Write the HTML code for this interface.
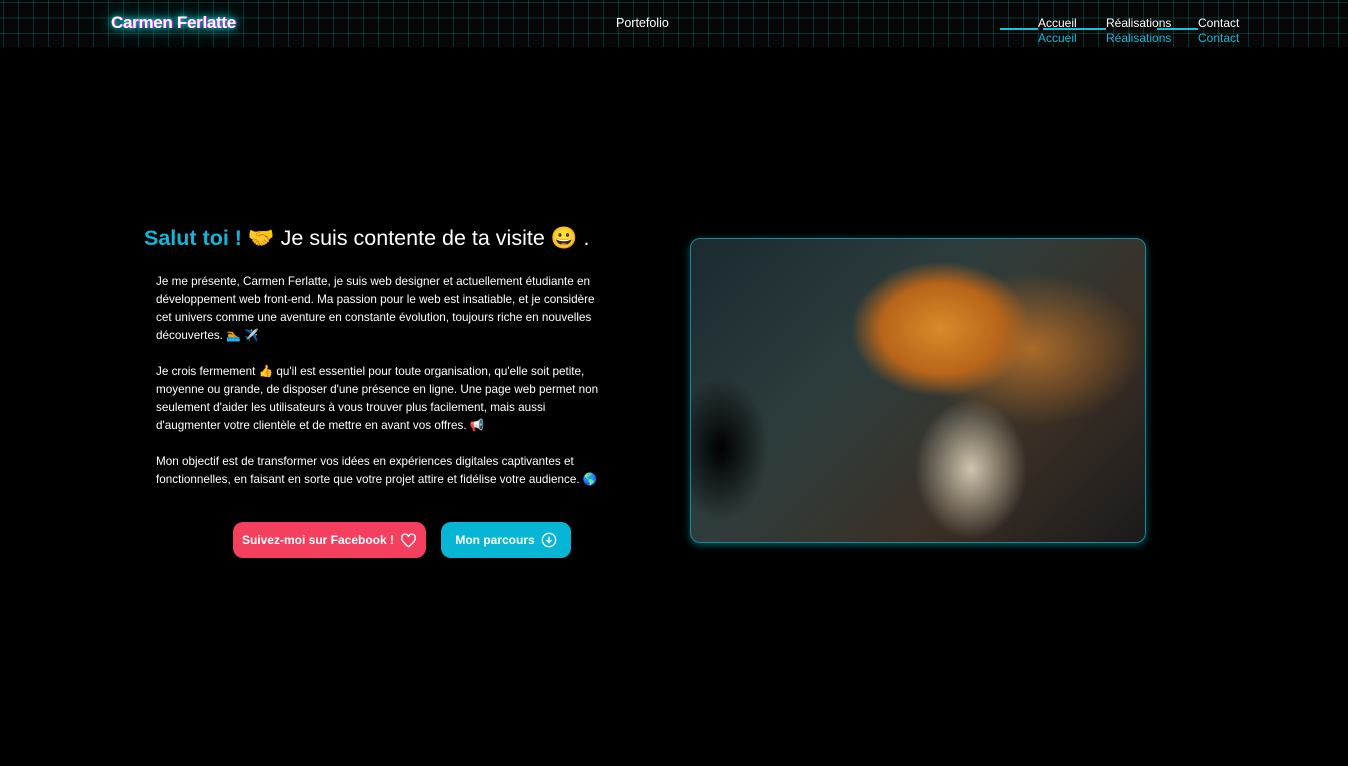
<!DOCTYPE html>
<html><head><meta charset="utf-8"><style>
*{margin:0;padding:0;box-sizing:border-box}
body{width:1348px;height:766px;background:#000;overflow:hidden;font-family:"Liberation Sans","Noto Sans CJK JP",sans-serif;color:#fff;position:relative}
.hdr{position:absolute;left:0;top:0;width:1348px;height:47px;background-color:#070707;
background-image:linear-gradient(rgba(0,150,150,.3) 1px,transparent 1px),linear-gradient(90deg,rgba(0,150,150,.3) 1px,transparent 1px);
background-size:15px 15.5px;background-position:3px 2px}
.logo{position:absolute;left:111px;top:13px;font-size:17px;font-weight:bold;color:#fff;letter-spacing:-0.3px;text-shadow:1px 0 #f0f,0 0 6px #0ff,0 0 14px #0cc,0 0 24px #088}
.pf{position:absolute;left:616px;top:16px;font-size:12.5px}
.nav{position:absolute;top:16px;font-size:12px;line-height:15px}
.nav .b{color:#13b5d8}
.ul{position:absolute;top:28px;height:2px;background:#13c6d8}
h1{position:absolute;left:144px;top:226px;font-size:21.5px;font-weight:normal;white-space:nowrap}
h1 b{color:#13b5d8}
.txt{position:absolute;left:156px;top:273px;width:452px;font-size:11.7px;line-height:18px}
.txt p{margin-bottom:18px}
.btn{position:absolute;top:522px;height:36px;border-radius:10px;font-size:12px;font-weight:bold;display:flex;align-items:center;justify-content:center;gap:6px}
.img{position:absolute;left:690px;top:238px;width:456px;height:305px;border-radius:10px;overflow:hidden;border:1px solid #1a8a9a;box-shadow:0 2px 8px rgba(0,180,200,.5);
background:radial-gradient(ellipse 120px 90px at 250px 90px,#d98a2a 0%,#b8651a 50%,transparent 75%),
radial-gradient(ellipse 160px 110px at 340px 110px,rgba(200,120,40,.8),transparent 70%),
radial-gradient(ellipse 80px 100px at 280px 230px,#cfc4ad,transparent 70%),
radial-gradient(ellipse 60px 90px at 30px 210px,#000,transparent 80%),
linear-gradient(135deg,#1b2a30,#2e3d3c 40%,#3a2f25 70%,#1a1a1a)}
</style></head><body>
<div class="hdr"></div>
<div class="logo">Carmen Ferlatte</div>
<div class="pf">Portefolio</div>
<div class="ul" style="left:1000px;width:38px"></div>
<div class="ul" style="left:1043px;width:63px"></div>
<div class="ul" style="left:1157px;width:41px"></div>
<div class="nav" style="left:1038px">Accueil<br><span class="b">Accueil</span></div>
<div class="nav" style="left:1106px">Réalisations<br><span class="b">Réalisations</span></div>
<div class="nav" style="left:1198px">Contact<br><span class="b">Contact</span></div>
<h1><b>Salut toi !</b> 🤝 Je suis contente de ta visite 😀 .</h1>
<div class="txt">
<p>Je me présente, Carmen Ferlatte, je suis web designer et actuellement étudiante en développement web front-end. Ma passion pour le web est insatiable, et je considère cet univers comme une aventure en constante évolution, toujours riche en nouvelles découvertes. 🏊 ✈️</p>
<p>Je crois fermement 👍 qu'il est essentiel pour toute organisation, qu'elle soit petite, moyenne ou grande, de disposer d'une présence en ligne. Une page web permet non seulement d'aider les utilisateurs à vous trouver plus facilement, mais aussi d'augmenter votre clientèle et de mettre en avant vos offres. 📢</p>
<p>Mon objectif est de transformer vos idées en expériences digitales captivantes et fonctionnelles, en faisant en sorte que votre projet attire et fidélise votre audience. 🌎</p>
</div>
<div class="btn" style="left:233px;width:193px;background:#f43f5e">Suivez-moi sur Facebook ! <svg width="17" height="15" viewBox="0 0 24 22" fill="none" stroke="#fff" stroke-width="2"><path d="M12 20S2 13.5 2 7a5 5 0 0 1 10-1 5 5 0 0 1 10 1c0 6.5-10 13-10 13z"/></svg></div>
<div class="btn" style="left:441px;width:130px;background:#06b6d4">Mon parcours <svg width="16" height="16" viewBox="0 0 24 24" fill="none" stroke="#fff" stroke-width="2"><circle cx="12" cy="12" r="10"/><path d="M12 7v9M8 12l4 4 4-4"/></svg></div>
<div class="img"></div>
</body></html>
